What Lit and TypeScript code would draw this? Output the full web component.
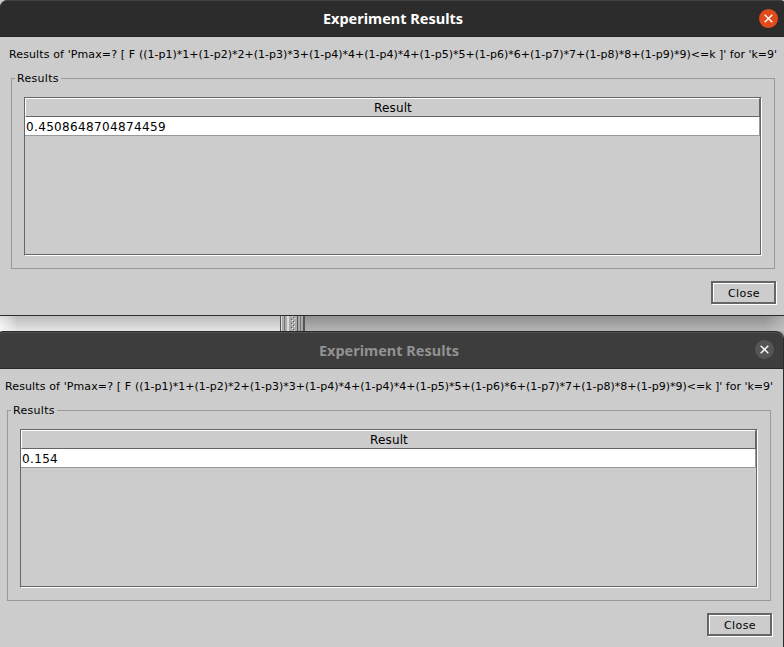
import { LitElement, html, css } from "lit";
import { customElement, property } from "lit/decorators.js";

@customElement("result-window")
class ResultWindow extends LitElement {
  @property() value = "";
  @property({ type: Boolean, reflect: true }) inactive = false;

  static styles = css`
    :host {
      display: flex;
      flex-direction: column;
      box-sizing: border-box;
      width: 787px;
      height: 316px;
      background: #ccc;
      border-bottom: 1px solid #2b2b2b;
      color: #000;
      font: 11px/14px "DejaVu Sans", sans-serif;
      white-space: nowrap;
      overflow: hidden;
    }
    .title {
      display: flex;
      align-items: center;
      flex: none;
      box-sizing: border-box;
      height: 37px;
      padding-right: 9px;
      background: #2c2c2c;
      border-top: 1px solid #414141;
      border-bottom: 1px solid #262626;
      border-radius: 7px 7px 0 0;
      color: #fff;
    }
    h1 {
      flex: 1;
      margin: 0;
      padding: 0 0 2px 27px;
      text-align: center;
      font: bold 14.5px/20px "Noto Sans", sans-serif;
      letter-spacing: 0;
    }
    .x {
      display: block;
      width: 19px;
      height: 19px;
      border-radius: 50%;
      background: #e14a1a;
    }
    .query {
      margin: 11px 0 0 9px;
    }
    .lead {
      letter-spacing: 0.12px;
    }
    .group {
      display: block;
      position: relative;
      box-sizing: border-box;
      width: 764px;
      height: 191px;
      margin: 16px 0 0 11px;
      padding: 18px 12px 12px;
      border: 1px solid #999;
    }
    .legend {
      position: absolute;
      top: -7px;
      left: 3px;
      padding: 0 2px;
      background: #ccc;
      letter-spacing: 0.3px;
      line-height: 13px;
    }
    .pane {
      box-sizing: border-box;
      width: 738px;
      height: 159px;
      border: solid;
      border-width: 1px;
      border-color: #666 #fff #fff #666;
      font-size: 12px;
    }
    .inner {
      box-sizing: border-box;
      height: 157px;
      border: solid #666;
      border-width: 0 1px 1px 0;
    }
    .head {
      box-sizing: border-box;
      height: 19px;
      padding-left: 1px;
      border: solid;
      border-width: 1px 1px 1px 1px;
      border-color: #fff #666 #666 #fff;
      text-align: center;
      line-height: 18px;
      letter-spacing: 0.15px;
    }
    .row {
      box-sizing: border-box;
      height: 19px;
      padding-left: 1px;
      background: #fff;
      border: solid #999;
      border-width: 0 1px 1px 0;
      line-height: 20px;
    }
    .value {
      letter-spacing: 0.35px;
    }
    .button {
      box-sizing: border-box;
      width: 65px;
      height: 23px;
      margin: 12px 0 0 711px;
      padding-left: 1px;
      border: 2px solid #666;
      box-shadow: inset 1px 1px #fff, 1px 1px #fff;
      text-align: center;
      line-height: 21px;
      letter-spacing: 0.4px;
    }
    :host([inactive]) {
      height: 317px;
      width: 788px;
      border-bottom: 0;
      border-right: 1px solid #2b2b2b;
      border-radius: 7px 7px 0 0;
    }
    :host([inactive]) .title {
      height: 38px;
      background: #3d3d3d;
      border-color: #292929;
      color: #929292;
      box-shadow: inset 0 1px #505050;
    }
    :host([inactive]) h1 {
      padding-bottom: 0;
    }
    :host([inactive]) .x {
      background: #555;
      margin-bottom: 1px;
    }
  `;

  render() {
    return html`
      <div class="title">
        <h1>Experiment Results</h1>
        <svg class="x" viewBox="0 0 19 19">
          <path d="M5.7 5.7l7.6 7.6M13.3 5.7l-7.6 7.6" stroke="#fff" stroke-width="1.4" />
        </svg>
      </div>
      <div class="query"><span class="lead">Results of 'Pmax=? [ F </span>((1-p1)*1+(1-p2)*2+(1-p3)*3+(1-p4)*4+(1-p4)*4+(1-p5)*5+(1-p6)*6+(1-p7)*7+(1-p8)*8+(1-p9)*9)&lt;=k ]' for 'k=9'</div>
      <div class="group">
        <span class="legend">Results</span>
        <div class="pane">
          <div class="inner">
            <div class="head">Result</div>
            <div class="row"><span class="value">${this.value}</span></div>
          </div>
        </div>
      </div>
      <div class="button">Close</div>
    `;
  }
}

@customElement("app-root")
class AppRoot extends LitElement {
  static styles = css`
    :host {
      display: block;
      width: 784px;
      height: 647px;
      overflow: hidden;
      background: #383838;
    }
    .gap {
      display: flex;
      height: 15px;
      margin-bottom: -9px;
      padding-bottom: 9px;
      background: #b5b5b5;
    }
    .left {
      width: 280px;
      background: radial-gradient(ellipse 18px 26px at 0 12px, #f5f5f5, transparent), linear-gradient(#bcbcbc, #e4e4e4 15px);
    }
    .split {
      display: block;
      width: 25px;
      height: 24px;
    }
    .right {
      flex: 1;
      background: linear-gradient(90deg, transparent 460px, #ccc8 479px), linear-gradient(#909090, #b4b4b4 15px);
    }
    .second {
      position: relative;
      margin-left: -4px;
    }
  `;

  render() {
    return html`
      <result-window value="0.4508648704874459"></result-window>
      <div class="gap">
        <div class="left"></div>
        <svg class="split" viewBox="0 0 25 24" shape-rendering="crispEdges">
          <defs>
            <pattern id="bumps" width="4" height="4" patternUnits="userSpaceOnUse">
              <path d="M0 0h1v1h-1zM2 2h1v1h-1z" fill="#eee" />
              <path d="M1 1h1v1h-1zM3 3h1v1h-1z" fill="#555" />
            </pattern>
          </defs>
          <path d="M0 0h25v24H0z" fill="#aaa" />
          <path d="M0 0h1v24H0zM17 0h1v24h-1zM23 0h2v24h-2z" fill="#555" />
          <path d="M4 0h1v24H4zM20 0h1v24h-1z" fill="#777" />
          <path d="M1 0h1v24H1zM7 0h2v24H7z" fill="#ddd" />
          <path d="M11 0h4v24h-4z" fill="url(#bumps)" />
        </svg>
        <div class="right"></div>
      </div>
      <result-window class="second" inactive value="0.154"></result-window>
    `;
  }
}
